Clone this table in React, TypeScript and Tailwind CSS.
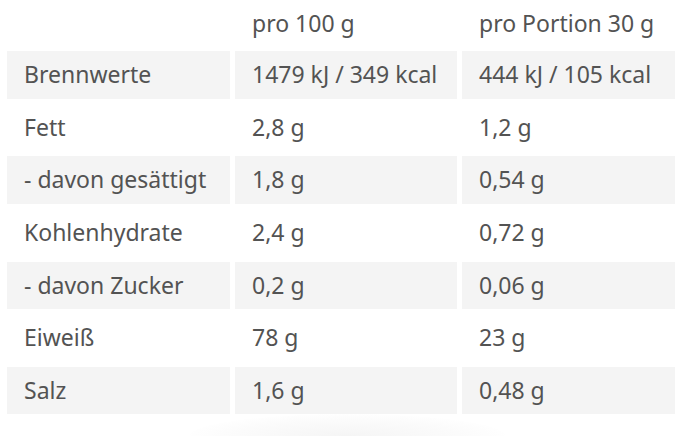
const rows: [string, string, string][] = [
  ['Brennwerte', '1479 kJ / 349 kcal', '444 kJ / 105 kcal'],
  ['Fett', '2,8 g', '1,2 g'],
  ['- davon gesättigt', '1,8 g', '0,54 g'],
  ['Kohlenhydrate', '2,4 g', '0,72 g'],
  ['- davon Zucker', '0,2 g', '0,06 g'],
  ['Eiweiß', '78 g', '23 g'],
  ['Salz', '1,6 g', '0,48 g'],
];

export default function App() {
  return (
    <main className="relative w-[687px] h-[436px] overflow-hidden bg-white text-[#535353] font-['Noto_Sans',sans-serif] text-[23px]">
      <div className="grid grid-cols-[223px_222px_213px] gap-x-[5px] gap-y-[5.3px] pl-[7px]">
        <div className="h-[46px]" />
        <div className="h-[46px] flex items-center pl-[17px]">pro 100 g</div>
        <div className="h-[46px] flex items-center pl-[17px]">pro Portion 30 g</div>
        {rows.map((r, i) =>
          r.map((cell, j) => (
            <div
              key={`${i}-${j}`}
              className={`h-[47.3px] flex items-center pl-[17px] pb-[1px] whitespace-nowrap ${i % 2 === 0 ? 'bg-[#f4f4f4]' : ''}`}
            >
              {cell}
            </div>
          ))
        )}
      </div>
      <div className="absolute left-[190px] top-[414px] w-[315px] h-[44px] rounded-[50%] bg-[radial-gradient(ellipse_at_center,#f5f5f5_0%,#fbfbfb_50%,#ffffff_75%)]" />
    </main>
  );
}
